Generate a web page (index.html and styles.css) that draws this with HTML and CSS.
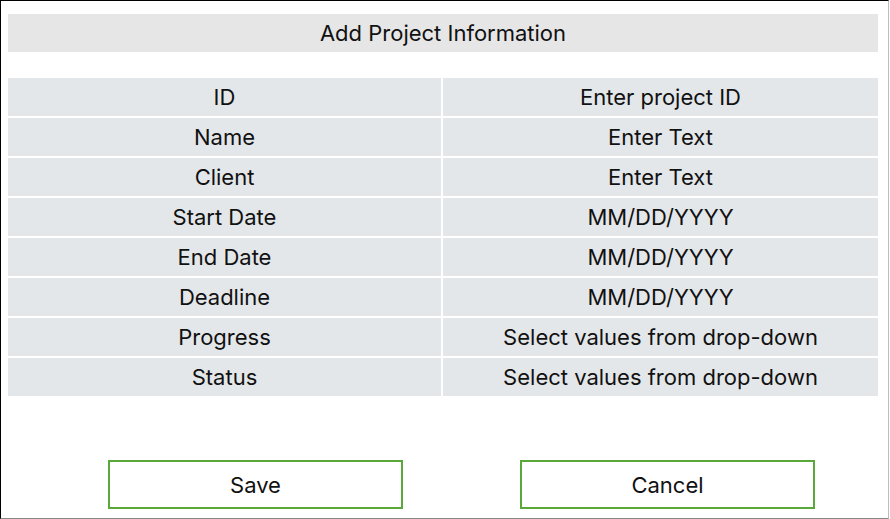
FILE: index.html
```html
<!DOCTYPE html>
<html>
<head>
<meta charset="utf-8">
<link rel="stylesheet" href="styles.css">
</head>
<body>
<div class="frame">
  <div class="title">Add Project Information</div>
  <div class="table">
    <div class="cell">ID</div><div class="cell">Enter project ID</div>
    <div class="cell">Name</div><div class="cell">Enter Text</div>
    <div class="cell">Client</div><div class="cell">Enter Text</div>
    <div class="cell">Start Date</div><div class="cell">MM/DD/YYYY</div>
    <div class="cell">End Date</div><div class="cell">MM/DD/YYYY</div>
    <div class="cell">Deadline</div><div class="cell">MM/DD/YYYY</div>
    <div class="cell">Progress</div><div class="cell">Select values from drop-down</div>
    <div class="cell">Status</div><div class="cell">Select values from drop-down</div>
  </div>
  <div class="actions">
    <button class="btn">Save</button>
    <button class="btn">Cancel</button>
  </div>
</div>
</body>
</html>
```
FILE: styles.css
```css
html, body {
  margin: 0;
  padding: 0;
  background: #fff;
}
.frame {
  box-sizing: border-box;
  width: 889px;
  height: 519px;
  border-style: solid;
  border-width: 1px;
  border-color: #000 #bdbdbd #888 #000;
  padding: 13px 10px 0 7px;
  font-family: "Inter", "Liberation Sans", sans-serif;
  font-size: 22px;
  color: #111;
  display: flex;
  flex-direction: column;
}
.title {
  flex-shrink: 0;
  height: 38px;
  background: #e6e6e6;
  display: flex;
  align-items: center;
  justify-content: center;
}
.table {
  flex-shrink: 0;
  margin-top: 26px;
  display: grid;
  grid-template-columns: 433px 435px;
  grid-auto-rows: 38px;
  column-gap: 2px;
  row-gap: 2px;
}
.cell {
  background: #e4e7ea;
  display: flex;
  align-items: center;
  justify-content: center;
}
.actions {
  flex-shrink: 0;
  margin-top: 64px;
  display: flex;
  gap: 117px;
  padding-left: 100px;
}
.btn {
  flex-shrink: 0;
  box-sizing: border-box;
  width: 295px;
  height: 49px;
  background: #fff;
  border: 2px solid #5aa83a;
  font: inherit;
  color: #111;
  padding: 0;
}
```
